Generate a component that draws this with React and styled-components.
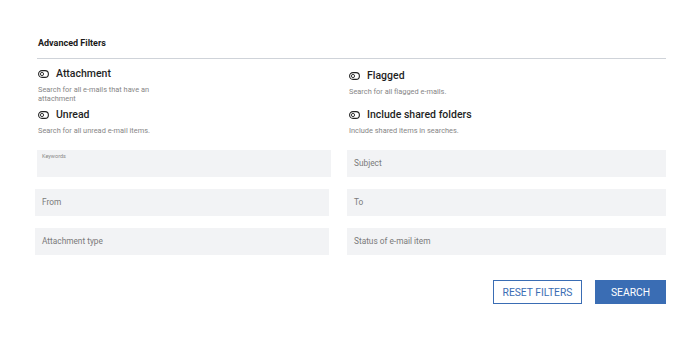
import React from 'react';
import styled, { createGlobalStyle } from 'styled-components';

const GlobalStyle = createGlobalStyle`
    body {
        margin: 0;
        background: #ffffff;
        font-family: Roboto, "Liberation Sans", sans-serif;
    }
`

const Panel = styled.div`
    width: 700px;
    height: 355px;
    box-sizing: border-box;
    padding: 36px 34px 0 35px;
    display: flex;
    flex-direction: column;
`

const Title = styled.h2`
    margin: 0 0 0 3px;
    font-size: 9px;
    font-weight: 700;
    color: #1a1a1a;
    line-height: 14px;
`

const Divider = styled.hr`
    margin: 8px 0 0 2px;
    border: 0;
    border-top: 1px solid #cfd3d9;
`

const ToggleGrid = styled.div`
    display: grid;
    grid-template-columns: 311px 1fr;
    grid-template-rows: 41px 32px;
    margin: 5px 0 0 3px;
`

const ToggleItem = styled.div`
    display: flex;
    flex-direction: column;
    justify-content: ${p => (p.$top ? 'flex-start' : 'center')};
    padding-top: ${p => (p.$top ? '5px' : '0')};
`

const ToggleHead = styled.div`
    display: flex;
    align-items: center;
    gap: 7px;
    font-size: 10.5px;
    font-weight: 500;
    color: #1f1f1f;
    line-height: 14px;
`

const Description = styled.p`
    margin: 4px 0 0;
    max-width: 140px;
    font-size: 7.4px;
    line-height: 9px;
    color: #868686;
`

const FieldGrid = styled.div`
    display: grid;
    grid-template-columns: 294px 319px;
    column-gap: 18px;
    row-gap: 12px;
    margin-top: 13px;
`

const Field = styled.div`
    height: 27px;
    background: #f2f3f5;
    box-sizing: border-box;
    display: flex;
    align-items: ${p => (p.$floating ? 'flex-start' : 'center')};
    padding: ${p => (p.$floating ? '3px 5px' : '0 7px 1px')};
    margin: ${p => (p.$shift ? '0 -2px 0 2px' : '0')};
    font-size: ${p => (p.$floating ? '5.5px' : '8.3px')};
    color: ${p => (p.$floating ? '#888' : '#7a7a7a')};
`

const Actions = styled.div`
    display: flex;
    justify-content: flex-end;
    gap: 13px;
    margin-top: 25px;
`

const Button = styled.button`
    height: 24px;
    padding: 0;
    width: ${p => (p.$primary ? '71px' : '89px')};
    box-sizing: border-box;
    border: 1px solid #3a6db4;
    background: ${p => (p.$primary ? '#3a6db4' : '#ffffff')};
    color: ${p => (p.$primary ? '#ffffff' : '#3a6db4')};
    font-family: Roboto, "Liberation Sans", sans-serif;
    font-size: 10.3px;
    text-transform: uppercase;
    cursor: pointer;
`

const ToggleIcon = () => (
    <svg width="11" height="8" viewBox="0 0 11 8">
        <rect x="0.6" y="0.6" width="9.8" height="6.8" rx="3.4" fill="none" stroke="#222" strokeWidth="1.1" />
        <circle cx="4" cy="4" r="1.6" fill="none" stroke="#222" strokeWidth="0.9" />
    </svg>
)

const toggles = [
    { label: 'Attachment', text: 'Search for all e-mails that have an attachment' },
    { label: 'Flagged', text: 'Search for all flagged e-mails.', top: true },
    { label: 'Unread', text: 'Search for all unread e-mail items.' },
    { label: 'Include shared folders', text: 'Include shared items in searches.' },
]

const App = () => {
    return (
        <>
            <GlobalStyle />
            <Panel>
                <Title>Advanced Filters</Title>
                <Divider />
                <ToggleGrid>
                    {toggles.map(t => (
                        <ToggleItem key={t.label} $top={t.top}>
                            <ToggleHead>
                                <ToggleIcon />
                                {t.label}
                            </ToggleHead>
                            <Description>{t.text}</Description>
                        </ToggleItem>
                    ))}
                </ToggleGrid>
                <FieldGrid>
                    <Field $floating $shift>Keywords</Field>
                    <Field>Subject</Field>
                    <Field>From</Field>
                    <Field>To</Field>
                    <Field>Attachment type</Field>
                    <Field>Status of e-mail item</Field>
                </FieldGrid>
                <Actions>
                    <Button>Reset filters</Button>
                    <Button $primary>Search</Button>
                </Actions>
            </Panel>
        </>
    )
}

export default App
